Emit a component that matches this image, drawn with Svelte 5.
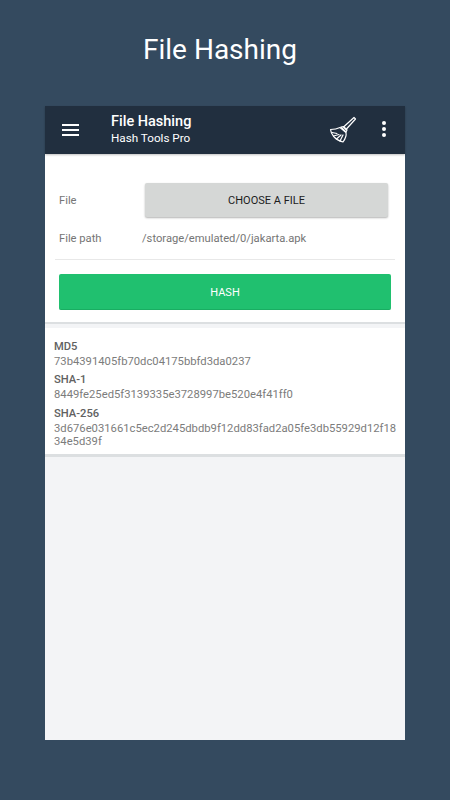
<script>
  const hashes = [
    { name: 'MD5', value: '73b4391405fb70dc04175bbfd3da0237' },
    { name: 'SHA-1', value: '8449fe25ed5f3139335e3728997be520e4f41ff0' },
    { name: 'SHA-256', value: '3d676e031661c5ec2d245dbdb9f12dd83fad2a05fe3db55929d12f1834e5d39f' }
  ];
</script>

<div class="page">
  <h1>File Hashing</h1>
  <div class="phone">
    <header class="bar">
      <div class="menu"><span></span><span></span><span></span></div>
      <div class="titles">
        <div class="title">File Hashing</div>
        <div class="subtitle">Hash Tools Pro</div>
      </div>
      <svg class="broom" viewBox="0 0 28 28" fill="none" stroke="#fff" stroke-width="1.2" stroke-linejoin="round" stroke-linecap="round">
        <path d="M25 1.500l1.500 1.500-9.500 10.500-2.500-2.500z" />
        <path d="M14.500 10.500l3.500 3.500-1 2-5-5z" />
        <path d="M11 11.500C8 13 4.500 13.500 1.500 13.500C2 18 5.500 24 14 26C16.500 22.500 17.500 19 17 16.500z" />
        <path d="M3 16.500l5 1M4.500 20l5.500-1.500M7.500 23l4.500-4M11 25l3-6" />
      </svg>
      <div class="dots"><span></span><span></span><span></span></div>
    </header>

    <section class="form">
      <div class="row file-row">
        <span class="label">File</span>
        <button class="choose">CHOOSE A FILE</button>
      </div>
      <div class="row path-row">
        <span class="label">File path</span>
        <span class="path">/storage/emulated/0/jakarta.apk</span>
      </div>
      <div class="divider"></div>
      <button class="hash">HASH</button>
    </section>

    <section class="results">
      {#each hashes as h}
        <div class="hash-name">{h.name}</div>
        <div class="hash-value">{h.value}</div>
      {/each}
    </section>
  </div>
</div>

<style>
  :global(body) {
    margin: 0;
    font-family: Roboto, "Liberation Sans", sans-serif;
  }
  .page {
    width: 450px;
    height: 800px;
    box-sizing: border-box;
    background: #344a5f;
    padding: 0 45px;
    overflow: hidden;
  }
  h1 {
    margin: 0 10px 0 0;
    padding: 30px 0 37px;
    font-size: 28px;
    line-height: 39px;
    font-weight: 400;
    color: #fff;
    text-align: center;
  }
  .phone {
    height: 634px;
    background: #f3f4f6;
  }
  .bar {
    height: 48px;
    background: #212f3f;
    display: flex;
    align-items: center;
    color: #fff;
    box-shadow: 0 1px 2px rgba(0, 0, 0, 0.25);
    position: relative;
  }
  .menu {
    width: 17px;
    margin-left: 17px;
    margin-bottom: 1px;
    display: flex;
    flex-direction: column;
    gap: 3px;
  }
  .menu span {
    height: 2px;
    background: #fff;
  }
  .titles {
    margin-left: 32px;
    flex: 1;
  }
  .title {
    font-size: 14.500px;
    line-height: 17px;
    font-weight: 500;
  }
  .subtitle {
    font-size: 11.700px;
    line-height: 17px;
  }
  .broom {
    width: 28px;
    height: 28px;
    margin-bottom: 1px;
  }
  .dots {
    display: flex;
    flex-direction: column;
    gap: 2px;
    margin: 0 19px 2px 25px;
  }
  .dots span {
    width: 4px;
    height: 4px;
    border-radius: 50%;
    background: #fff;
  }
  .form {
    background: #fff;
    padding: 29px 10px 12px 14px;
    border-bottom: 2px solid #dcdfe1;
  }
  .row {
    display: flex;
    align-items: center;
    color: #757575;
  }
  .label {
    font-size: 11.200px;
    width: 83px;
    flex-shrink: 0;
  }
  .file-row .label {
    width: 86px;
  }
  .choose {
    width: 243px;
    height: 34px;
    border: none;
    border-radius: 2px;
    background: #d5d7d6;
    color: #1c1c1c;
    font: 400 11px Roboto, sans-serif;
    box-shadow: 0 1px 2px rgba(0, 0, 0, 0.3);
  }
  .path-row {
    height: 16px;
    margin-top: 13px;
  }
  .path {
    font-size: 11.200px;
  }
  .divider {
    height: 1px;
    margin: 13px 0 14px -4px;
    background: #e8e8e8;
  }
  .hash {
    display: block;
    width: 332px;
    height: 36px;
    padding: 1px 0 0;
    border: none;
    border-bottom: 1px solid #19ad62;
    border-radius: 2px;
    background: #20c06f;
    color: #fff;
    font: 400 11px Roboto, sans-serif;
  }
  .results {
    margin-top: 4px;
    background: #fff;
    padding: 7.500px 6px 1.500px 9px;
    border-bottom: 3px solid #dcdfe1;
  }
  .hash-name {
    font-size: 11.200px;
    font-weight: 500;
    color: #616161;
    line-height: 15px;
    margin-top: 3px;
    margin-bottom: 1px;
  }
  .hash-value {
    font-size: 11.250px;
    line-height: 13px;
    color: #7c7c7c;
    margin-bottom: 4.500px;
    word-break: break-all;
  }
</style>
